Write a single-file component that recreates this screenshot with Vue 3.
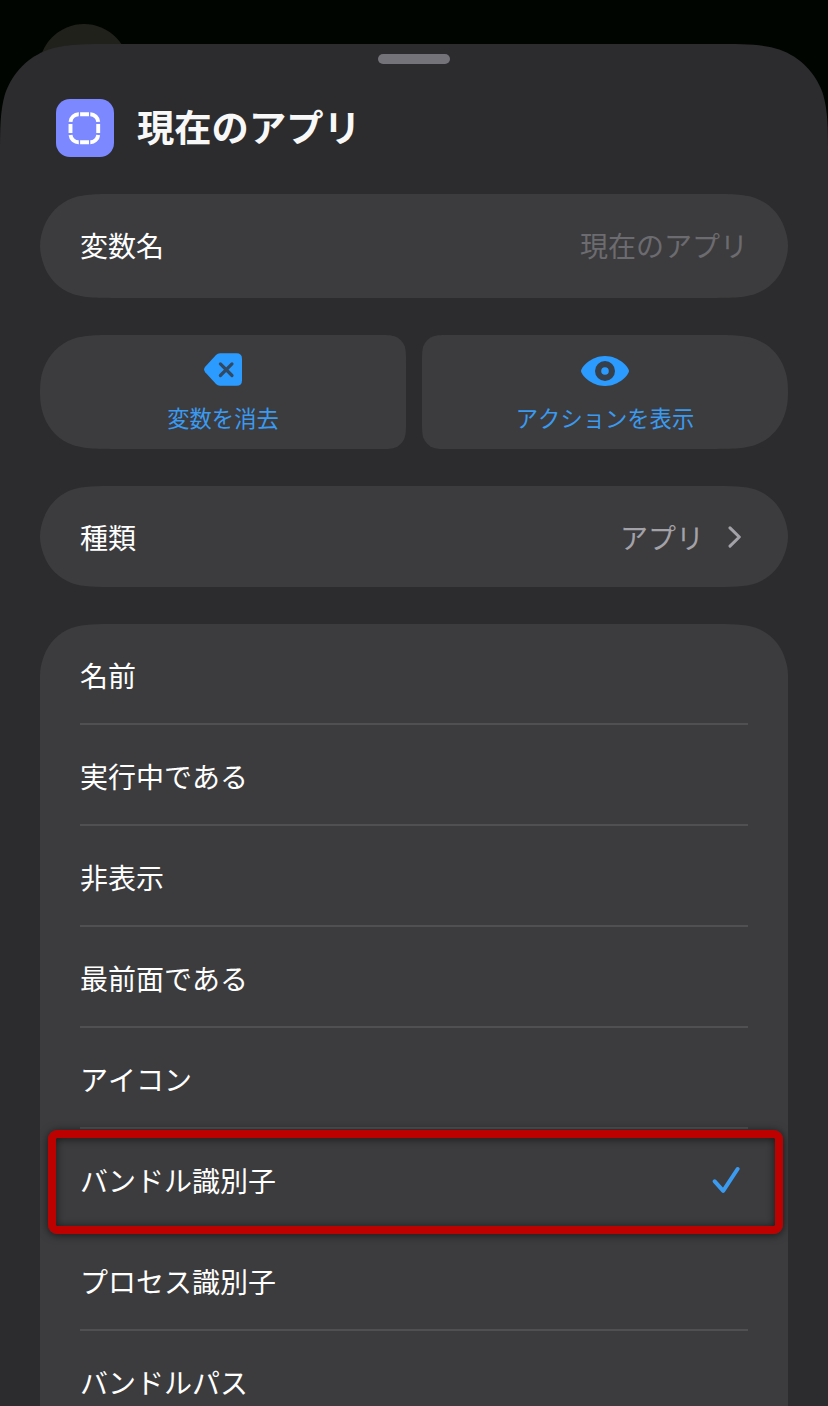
<template>
  <div class="screen" lang="ja">
    <div class="backdrop-dot"></div>
    <main class="sheet" :style="{ clipPath: sheetShape }">
      <div class="grabber"></div>

      <header class="title-row">
        <div class="app-icon">
          <svg viewBox="0 0 58 58" width="58" height="58">
            <g fill="none" stroke="#fff" stroke-width="3.9">
              <path d="M14.5 22.8 A8.1 8.1 0 0 1 22.8 15.3" />
              <path d="M34.3 15.3 A8.1 8.1 0 0 1 42.2 22.8" />
              <path d="M42.2 36 A8.1 8.1 0 0 1 34.3 43.2" />
              <path d="M22.8 43.2 A8.1 8.1 0 0 1 14.5 36" />
              <path d="M24.1 15.3 H33" />
              <path d="M24.1 43.2 H33" />
              <path d="M14.5 24.9 V34" />
              <path d="M42.2 24.9 V34" />
            </g>
          </svg>
        </div>
        <h1>現在のアプリ</h1>
      </header>

      <section class="card name-card" :style="{ clipPath: nameShape }">
        <span>変数名</span>
        <span class="placeholder">現在のアプリ</span>
      </section>

      <div class="actions">
        <button class="action" :style="{ clipPath: clearShape }">
          <svg viewBox="0 0 38 33" width="38" height="33">
            <path
              d="M16 0.3 H32.5 Q38 0.3 38 5.8 V27.2 Q38 32.7 32.5 32.7 H16 Q13.6 32.7 12 31.1 L1.2 19.2 Q-1 16.5 1.2 13.8 L12 1.9 Q13.6 0.3 16 0.3 Z"
              fill="#2b9bff"
            />
            <path
              d="M16.4 10.9 L28 22.5 M28 10.9 L16.4 22.5"
              stroke="#304a64"
              stroke-width="3.2"
              stroke-linecap="round"
            />
          </svg>
          <span>変数を消去</span>
        </button>
        <button class="action" :style="{ clipPath: showShape }">
          <svg viewBox="0 0 48 33" width="48" height="33">
            <path
              d="M0 18 C0 14.8 9.5 3 24 3 C38.5 3 48 14.8 48 18 C48 21.2 38.5 33 24 33 C9.5 33 0 21.2 0 18 Z"
              fill="#2b9bff"
            />
            <circle cx="24" cy="18" r="10" fill="#35404c" />
            <circle cx="24" cy="18" r="3.8" fill="#2b9bff" />
          </svg>
          <span>アクションを表示</span>
        </button>
      </div>

      <section class="card type-card" :style="{ clipPath: typeShape }">
        <span>種類</span>
        <span class="value">
          アプリ
          <svg viewBox="0 0 14 22" width="14" height="22">
            <path
              d="M2 1.9 L11.3 11 L2 20.1"
              fill="none"
              stroke="#a3a2a8"
              stroke-width="3"
              stroke-linecap="round"
              stroke-linejoin="round"
            />
          </svg>
        </span>
      </section>

      <ul class="list" :style="{ clipPath: listShape }">
        <li v-for="item in properties" :key="item" @click="selected = item">
          <span>{{ item }}</span>
          <svg v-if="item === selected" class="check" viewBox="0 0 28 28" width="28" height="28">
            <path
              d="M2.7 15.3 L11.2 24.8 L25.6 3"
              fill="none"
              stroke="#3b9bf0"
              stroke-width="4"
              stroke-linecap="round"
              stroke-linejoin="round"
            />
          </svg>
          <div v-if="item === selected" class="highlight"></div>
        </li>
      </ul>
    </main>
  </div>
</template>

<script setup>
import { ref } from "vue";

const properties = [
  "名前",
  "実行中である",
  "非表示",
  "最前面である",
  "アイコン",
  "バンドル識別子",
  "プロセス識別子",
  "バンドルパス"
];
const selected = ref("バンドル識別子");

// Points of a continuous corner, from the horizontal edge to the vertical edge
const corner = (r, maxY) => {
  const pts = [
    [1.5287, 0], [1.0885, 0], [0.8684, 0], [0.6315, 0.0749],
    [0.3728, 0.1691], [0.1691, 0.3728], [0.0749, 0.6315]
  ];
  if (r * 1.5287 > maxY) {
    pts.push([0.03, 0.755], [0, 0.87], [0, maxY / r]);
  } else {
    pts.push([0, 0.8684], [0, 1.0885], [0, 1.5287]);
  }
  return pts.map(([x, y]) => [x * r, y * r]);
};

// Radii go top-left, top-right, bottom-right, bottom-left
const smoothRect = (w, h, [tl, tr, br, bl], maxY = h / 2) => {
  const place = (pts, flipX, flipY) =>
    pts.map(([x, y]) => [flipX ? w - x : x, flipY ? h - y : y]);
  const curve = (pts) => {
    const [a, ...rest] = pts.map((p) => p.map((n) => n.toFixed(2)).join(" "));
    return `L${a} C${rest.slice(0, 3).join(" ")} C${rest.slice(3, 6).join(" ")} C${rest.slice(6).join(" ")}`;
  };
  const d = [
    curve(place(corner(tl, maxY), false, false).reverse()),
    curve(place(corner(tr, maxY), true, false)),
    curve(place(corner(br, maxY), true, true).reverse()),
    curve(place(corner(bl, maxY), false, true))
  ].join(" ");
  return `path("M${d.slice(1)} Z")`;
};

const sheetShape = smoothRect(828, 1500, [76, 76, 0, 0]);
const nameShape = smoothRect(748, 104, [52, 52, 52, 52]);
const clearShape = smoothRect(366, 114, [52, 18, 18, 52]);
const showShape = smoothRect(366, 114, [18, 52, 52, 18]);
const typeShape = smoothRect(748, 101, [50.5, 50.5, 50.5, 50.5]);
const listShape = smoothRect(748, 900, [51, 51, 0, 0], 51);
</script>

<style>
body {
  margin: 0;
  background: #000500;
}
</style>

<style scoped>
.screen {
  position: relative;
  box-sizing: border-box;
  width: 828px;
  height: 1406px;
  padding-top: 44px;
  overflow: hidden;
  background: #000500;
  color: #fff;
  font-family: "Noto Sans CJK JP", sans-serif;
  font-size: 28px;
  font-kerning: none;
  line-height: 40px;
}

.backdrop-dot {
  position: absolute;
  top: 24px;
  left: 39px;
  width: 90px;
  height: 90px;
  border-radius: 50%;
  background: #20211b;
}

.sheet {
  position: relative;
  box-sizing: border-box;
  height: 1500px;
  padding: 10px 40px 0;
  background: #2c2c2e;
}

.grabber {
  width: 72px;
  height: 10px;
  margin: 0 auto;
  border-radius: 5px;
  background: #747379;
}

.title-row {
  display: flex;
  align-items: center;
  gap: 23px;
  height: 58px;
  padding: 35px 16px 37px;
}

.app-icon {
  width: 58px;
  height: 58px;
  border-radius: 14px;
  background: #7b88ff;
}

.app-icon svg {
  display: block;
}

h1 {
  margin: 0;
  padding-bottom: 3px;
  color: #f8f8f8;
  font-size: 37.3px;
  font-weight: 700;
  line-height: 55px;
}

.card {
  display: flex;
  align-items: center;
  justify-content: space-between;
  box-sizing: border-box;
  padding: 0 40px;
  background: #3c3c3e;
}

.name-card {
  height: 104px;
}

.placeholder {
  color: #6c6b70;
}

.name-card span {
  padding-bottom: 2px;
}

.actions {
  display: flex;
  gap: 16px;
  margin: 37px 0;
}

.action {
  display: flex;
  flex: 1;
  flex-direction: column;
  align-items: center;
  gap: 15px;
  height: 114px;
  padding: 18px 0 0;
  border: none;
  background: #3c3c3e;
  color: #3a9af0;
  font-family: inherit;
  font-kerning: none;
  font-size: 22.3px;
  line-height: 32px;
}

.type-card {
  height: 101px;
}

.value {
  display: flex;
  align-items: center;
  gap: 24px;
  padding-right: 6px;
  color: #a3a2a8;
}

/* Selectable properties */
.list {
  height: 900px;
  margin: 37px 0 0;
  padding: 0;
  background: #3c3c3e;
  list-style: none;
}

.list li {
  position: relative;
  display: flex;
  align-items: center;
  justify-content: space-between;
  box-sizing: border-box;
  height: 101px;
  margin: 0 40px;
  padding-top: 2px;
  border-bottom: 2px solid #505053;
}

.check {
  margin-right: 8px;
}

.highlight {
  position: absolute;
  top: 1px;
  left: -32px;
  box-sizing: border-box;
  width: 735px;
  height: 104px;
  border: 8px solid #bd0000;
  border-radius: 9px;
  box-shadow: 0 1px 8px rgba(0, 0, 0, 0.6), inset 0 1px 8px rgba(0, 0, 0, 0.6);
}
</style>
